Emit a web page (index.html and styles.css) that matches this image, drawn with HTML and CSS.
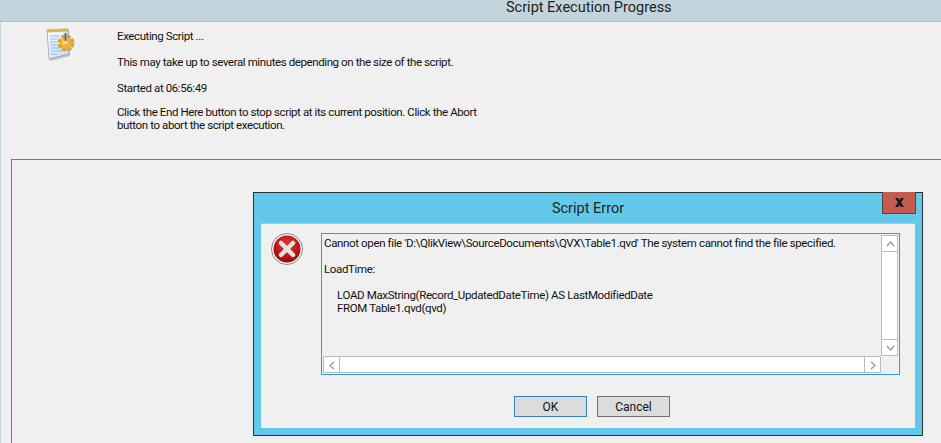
FILE: index.html
```html
<!doctype html>
<html lang="en">
  <head>
    <meta charset="UTF-8" />
    <title>Script Execution Progress</title>
    <link rel="stylesheet" href="styles.css">
  </head>
  <body>
    <div class="progress-window">
      <header class="window-title">Script Execution Progress</header>
      <div class="window-body">
        <section class="status">
          <svg class="status-icon" width="36" height="36" viewBox="0 0 36 36">
            <defs>
              <linearGradient id="sheet" x1="0" y1="0" x2="1" y2="1">
                <stop offset="0" stop-color="#fdfeff" />
                <stop offset="1" stop-color="#c5d9ef" />
              </linearGradient>
            </defs>
            <path d="M3 5 L24 3 L25 29 L5 34 Z" fill="#8f98a3" opacity="0.5" />
            <path d="M2 3 L23 2 L24 27 L4 32 Z" fill="url(#sheet)" stroke="#8fa2b8" stroke-width="0.8" />
            <path d="M2 2.500 L23 1.500 L23.200 4.500 L2.200 5.500 Z" fill="#d9b54a" />
            <path d="M5 9 H14 M5 12 H12 M5 15 H12 M5.500 18 H12 M5.500 21 H15 M6 24 H17 M6 27 H12" stroke="#8dbce6" stroke-width="1" />
            <circle cx="22" cy="17" r="7" fill="#000" opacity="0.18" />
            <circle cx="21" cy="16" r="6.500" fill="none" stroke="#dd9f26" stroke-width="4" stroke-dasharray="3.400 1.700" />
            <circle cx="21" cy="16" r="5.500" fill="#eeb33c" />
            <circle cx="20" cy="15" r="2.500" fill="#f8dc8e" />
            <path d="M20.500 6 V14" stroke="#666e78" stroke-width="2" />
          </svg>
          <div class="status-text">
            <p>Executing Script ...</p>
            <p>This may take up to several minutes depending on the size of the script.</p>
            <p>Started at 06:56:49</p>
            <p>Click the End Here button to stop script at its current position. Click the Abort button to abort the script execution.</p>
          </div>
        </section>
        <div class="log-group"></div>
      </div>
    </div>

    <div class="error-dialog">
      <div class="dialog-titlebar">
        <span class="dialog-title">Script Error</span>
        <span class="close-button">
          <svg width="11" height="9" viewBox="0 0 11 9"><path d="M1 0 H4 L5.500 2 L7 0 H10 L7 4.500 L10 9 H7 L5.500 7 L4 9 H1 L4 4.500 Z" fill="#1a1a1a" /></svg>
        </span>
      </div>
      <div class="dialog-client">
        <div class="dialog-main">
          <svg class="error-icon" width="33" height="33" viewBox="0 0 33 33">
            <defs>
              <radialGradient id="red" cx="0.5" cy="0.35" r="0.7">
                <stop offset="0" stop-color="#de3b3b" />
                <stop offset="0.7" stop-color="#b50f12" />
                <stop offset="1" stop-color="#8e0508" />
              </radialGradient>
            </defs>
            <circle cx="16" cy="16" r="15.500" fill="#f4f4f4" stroke="#8a8a8a" stroke-width="1" />
            <circle cx="16" cy="16" r="13.500" fill="url(#red)" />
            <path d="M10 10 L22 22 M22 10 L10 22" stroke="#e6e2e2" stroke-width="4.500" stroke-linecap="round" />
          </svg>
          <div class="error-box">
            <div class="error-text">
              <p class="error-line">Cannot open file 'D:\QlikView\SourceDocuments\QVX\Table1.qvd' The system cannot find the file specified.</p>
              <p class="error-line">LoadTime:</p>
              <p class="error-code">LOAD MaxString(Record_UpdatedDateTime) AS LastModifiedDate<br>FROM Table1.qvd(qvd)</p>
            </div>
            <div class="scroll-v">
              <span class="scroll-btn">
                <svg width="9" height="6" viewBox="0 0 9 6"><path d="M1 5 L4.500 1 L8 5" fill="none" stroke="#9a9a9a" stroke-width="1.300" /></svg>
              </span>
              <span class="scroll-track"></span>
              <span class="scroll-btn">
                <svg width="9" height="6" viewBox="0 0 9 6"><path d="M1 1 L4.500 5 L8 1" fill="none" stroke="#9a9a9a" stroke-width="1.300" /></svg>
              </span>
            </div>
            <div class="scroll-h">
              <span class="scroll-btn">
                <svg width="6" height="9" viewBox="0 0 6 9"><path d="M5 1 L1 4.500 L5 8" fill="none" stroke="#9a9a9a" stroke-width="1.300" /></svg>
              </span>
              <span class="scroll-track"></span>
              <span class="scroll-btn">
                <svg width="6" height="9" viewBox="0 0 6 9"><path d="M1 1 L5 4.500 L1 8" fill="none" stroke="#9a9a9a" stroke-width="1.300" /></svg>
              </span>
            </div>
          </div>
        </div>
        <div class="dialog-buttons">
          <button type="button" class="btn btn-default">OK</button>
          <button type="button" class="btn">Cancel</button>
        </div>
      </div>
    </div>
  </body>
</html>
```

FILE: styles.css
```css
:root {
  --face: #f0f0f0;
  --dialog-blue: #63c9eb;
  --accent: #2a9fdc;
  --scroll-line: #bcbcbc;
  --text: #111;
}

* {
  margin: 0;
  padding: 0;
  box-sizing: border-box;
}

html,
body {
  height: 100%;
  overflow: hidden;
}

body {
  position: relative;
  font-family: Roboto, 'Liberation Sans', sans-serif;
  font-size: 11.5px;
  letter-spacing: -0.36px;
  line-height: 13px;
  color: var(--text);
  background-color: var(--face);
}

.progress-window {
  display: flex;
  flex-direction: column;
  height: 100%;
}

.window-title {
  height: 22px;
  flex: none;
  padding-left: 506px;
  background-color: #c3d5dc;
  border-bottom: 1px solid #b3c4cb;
  font-size: 14.5px;
  letter-spacing: 0;
  line-height: 15px;
  color: #222;
  white-space: nowrap;
}

.window-body {
  flex: 1;
  display: flex;
  flex-direction: column;
  border-left: 1px solid #c3d5dc;
}

.status {
  height: 137px;
  flex: none;
  display: flex;
  padding: 5px 0 0 44px;
}

.status-icon {
  flex: none;
  margin-right: 36px;
}

.status-text {
  width: 364px;
  padding-top: 3px;
  letter-spacing: -0.4px;
}

.status-text p {
  margin-bottom: 13px;
}

.status-text p:nth-child(3) {
  margin-bottom: 11px;
}

.log-group {
  flex: 1;
  margin-left: 10px;
  margin-right: -2px;
  border: 1px solid #7a7a7a;
  border-bottom: none;
}

.error-dialog {
  position: absolute;
  left: 253px;
  top: 192px;
  width: 670px;
  height: 244px;
  display: flex;
  flex-direction: column;
  padding: 0 7px 7px;
  background-color: var(--dialog-blue);
  border: 1px solid #2b3033;
}

.dialog-titlebar {
  position: relative;
  height: 30px;
  flex: none;
  text-align: center;
}

.dialog-title {
  font-size: 14.5px;
  letter-spacing: 0;
  line-height: 32px;
  color: #222;
}

.close-button {
  position: absolute;
  top: -1px;
  right: -1px;
  width: 34px;
  height: 22px;
  display: flex;
  align-items: center;
  justify-content: center;
  background-color: #c45a50;
  border: 1px solid #5c4440;
  border-top: none;
}

.dialog-client {
  flex: 1;
  display: flex;
  flex-direction: column;
  padding: 9px 15px 0 10px;
  background-color: var(--face);
  border-top: 1px solid #a9c9d6;
}

.dialog-main {
  display: flex;
  height: 142px;
  flex: none;
}

.error-icon {
  flex: none;
  margin-right: 17px;
  align-self: flex-start;
}

.error-box {
  flex: 1;
  display: grid;
  grid-template-columns: 1fr 17px;
  grid-template-rows: 1fr 17px;
  padding: 1px;
  border: 1px solid var(--accent);
}

.error-text {
  padding: 2px 0 0 1px;
  overflow: hidden;
}

.error-line {
  margin-bottom: 13px;
}

.error-code {
  padding-left: 13px;
}

.scroll-v,
.scroll-h {
  display: flex;
  background-color: #fff;
  border: 1px solid var(--scroll-line);
}

.scroll-v {
  flex-direction: column;
}

.scroll-track {
  flex: 1;
}

.scroll-btn {
  flex: none;
  width: 16px;
  height: 16px;
  display: flex;
  align-items: center;
  justify-content: center;
}

.scroll-v .scroll-btn:first-child {
  border-bottom: 1px solid var(--scroll-line);
}

.scroll-v .scroll-btn:last-child {
  border-top: 1px solid var(--scroll-line);
}

.scroll-h .scroll-btn:first-child {
  border-right: 1px solid var(--scroll-line);
}

.scroll-h .scroll-btn:last-child {
  border-left: 1px solid var(--scroll-line);
}

.dialog-buttons {
  display: flex;
  justify-content: flex-end;
  gap: 10px;
  padding: 21px 230px 0 0;
}

.btn {
  width: 73px;
  height: 21px;
  background-color: #dcdcdc;
  border: 1px solid #707070;
  font-family: inherit;
  font-size: 12px;
  letter-spacing: 0;
  color: var(--text);
}

.btn-default {
  border-color: #3580bd;
}
```
